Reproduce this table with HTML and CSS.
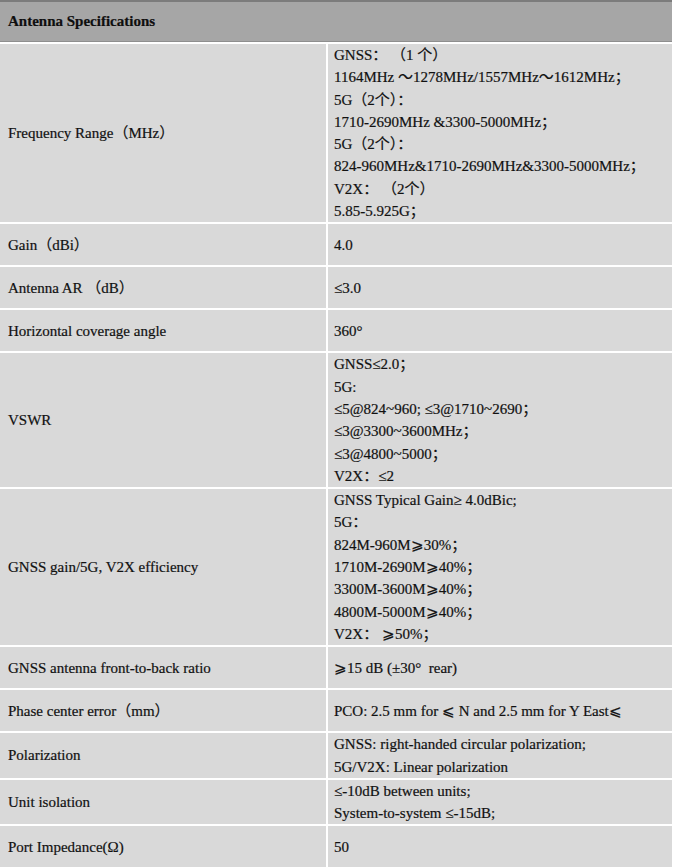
FILE: index.html
```html
<!DOCTYPE html>
<html>
<head>
<meta charset="utf-8">
<link rel="stylesheet" href="styles.css">
</head>
<body>
<div class="spec">
  <div class="head">Antenna Specifications</div>

  <div class="cell label">Frequency Range（MHz）</div>
  <div class="cell value multi">
    <div>GNSS： （1 个）</div>
    <div>1164MHz ～1278MHz/1557MHz～1612MHz；</div>
    <div>5G（2个）：</div>
    <div>1710-2690MHz &amp;3300-5000MHz；</div>
    <div>5G（2个）：</div>
    <div>824-960MHz&amp;1710-2690MHz&amp;3300-5000MHz；</div>
    <div>V2X： （2个）</div>
    <div>5.85-5.925G；</div>
  </div>

  <div class="cell label">Gain（dBi）</div>
  <div class="cell value">4.0</div>

  <div class="cell label">Antenna AR （dB）</div>
  <div class="cell value">≤3.0</div>

  <div class="cell label">Horizontal coverage angle</div>
  <div class="cell value">360°</div>

  <div class="cell label">VSWR</div>
  <div class="cell value multi">
    <div>GNSS≤2.0；</div>
    <div>5G:</div>
    <div>≤5@824~960; ≤3@1710~2690；</div>
    <div>≤3@3300~3600MHz；</div>
    <div>≤3@4800~5000；</div>
    <div>V2X：≤2</div>
  </div>

  <div class="cell label">GNSS gain/5G, V2X efficiency</div>
  <div class="cell value multi">
    <div>GNSS Typical Gain≥ 4.0dBic;</div>
    <div>5G：</div>
    <div>824M-960M⩾30%；</div>
    <div>1710M-2690M⩾40%；</div>
    <div>3300M-3600M⩾40%；</div>
    <div>4800M-5000M⩾40%；</div>
    <div>V2X： ⩾50%；</div>
  </div>

  <div class="cell label">GNSS antenna front-to-back ratio</div>
  <div class="cell value">⩾15 dB (±30°&nbsp; rear)</div>

  <div class="cell label">Phase center error（mm）</div>
  <div class="cell value">PCO: 2.5 mm for ⩽ N and 2.5 mm for Y East⩽</div>

  <div class="cell label">Polarization</div>
  <div class="cell value multi">
    <div>GNSS: right-handed circular polarization;</div>
    <div>5G/V2X: Linear polarization</div>
  </div>

  <div class="cell label">Unit isolation</div>
  <div class="cell value multi">
    <div>≤-10dB between units;</div>
    <div>System-to-system ≤-15dB;</div>
  </div>

  <div class="cell label">Port Impedance(Ω)</div>
  <div class="cell value">50</div>
</div>
</body>
</html>
```
FILE: styles.css
```css
html, body {
  margin: 0;
  padding: 0;
  background: #ffffff;
}

.spec {
  width: 672px;
  padding: 0 2px 2px 0;
  display: grid;
  grid-template-columns: 326px 344px;
  gap: 2px;
  background: #ffffff;
  font-family: "Liberation Serif", "Noto Sans CJK SC", "DejaVu Serif", serif;
  font-size: 15px;
  color: #111111;
  -webkit-text-stroke: 0.2px #111111;
}

.head {
  grid-column: 1 / span 2;
  height: 39px;
  background: #a6a6a6;
  border-top: 2px solid #7c7c7c;
  border-bottom: 1px solid #8e8e8e;
  display: flex;
  align-items: center;
  padding-left: 8px;
  font-weight: bold;
  color: #0e0e0e;
}

.cell {
  background: #d9d9d9;
  min-height: 41px;
  line-height: 22.3px;
  display: flex;
  flex-direction: column;
  justify-content: center;
}

.label {
  padding-left: 8px;
}

.value {
  padding-left: 6px;
  white-space: nowrap;
}
```
